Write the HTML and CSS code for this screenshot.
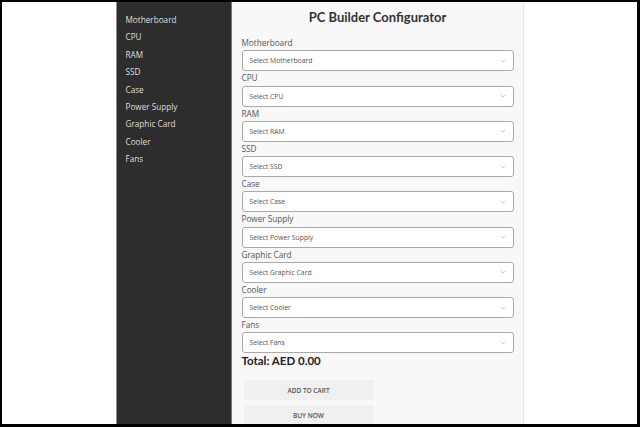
FILE: index.html
```html
<!DOCTYPE html>
<html lang="en">
<head>
<meta charset="utf-8">
<title>PC Builder Configurator</title>
<link rel="stylesheet" href="styles.css">
</head>
<body>
<div class="frame">
  <div class="layout">
    <nav class="sidebar">
      <a class="nav-item">Motherboard</a>
      <a class="nav-item">CPU</a>
      <a class="nav-item">RAM</a>
      <a class="nav-item">SSD</a>
      <a class="nav-item">Case</a>
      <a class="nav-item">Power Supply</a>
      <a class="nav-item">Graphic Card</a>
      <a class="nav-item">Cooler</a>
      <a class="nav-item">Fans</a>
    </nav>
    <main class="main">
      <h1 class="title">PC Builder Configurator</h1>
      <div class="field"><label class="label">Motherboard</label><div class="select"><span>Select Motherboard</span><svg class="chev" viewBox="0 0 8 5"><path d="M1 1l3 3 3-3"/></svg></div></div>
      <div class="field"><label class="label">CPU</label><div class="select"><span>Select CPU</span><svg class="chev" viewBox="0 0 8 5"><path d="M1 1l3 3 3-3"/></svg></div></div>
      <div class="field"><label class="label">RAM</label><div class="select"><span>Select RAM</span><svg class="chev" viewBox="0 0 8 5"><path d="M1 1l3 3 3-3"/></svg></div></div>
      <div class="field"><label class="label">SSD</label><div class="select"><span>Select SSD</span><svg class="chev" viewBox="0 0 8 5"><path d="M1 1l3 3 3-3"/></svg></div></div>
      <div class="field"><label class="label">Case</label><div class="select"><span>Select Case</span><svg class="chev" viewBox="0 0 8 5"><path d="M1 1l3 3 3-3"/></svg></div></div>
      <div class="field"><label class="label">Power Supply</label><div class="select"><span>Select Power Supply</span><svg class="chev" viewBox="0 0 8 5"><path d="M1 1l3 3 3-3"/></svg></div></div>
      <div class="field"><label class="label">Graphic Card</label><div class="select"><span>Select Graphic Card</span><svg class="chev" viewBox="0 0 8 5"><path d="M1 1l3 3 3-3"/></svg></div></div>
      <div class="field"><label class="label">Cooler</label><div class="select"><span>Select Cooler</span><svg class="chev" viewBox="0 0 8 5"><path d="M1 1l3 3 3-3"/></svg></div></div>
      <div class="field"><label class="label">Fans</label><div class="select"><span>Select Fans</span><svg class="chev" viewBox="0 0 8 5"><path d="M1 1l3 3 3-3"/></svg></div></div>
      <div class="total">Total: AED 0.00</div>
      <div class="actions">
        <button class="btn">ADD TO CART</button>
        <button class="btn">BUY NOW</button>
      </div>
    </main>
  </div>
</div>
</body>
</html>
```

FILE: styles.css
```css
* { box-sizing: border-box; }
html, body { margin: 0; padding: 0; background: #fff; }
body { width: 640px; height: 427px; overflow: hidden; }

.frame {
  width: 640px;
  height: 427px;
  border-style: solid;
  border-color: #000;
  border-width: 2px 3px 3px 2px;
  background: #fff;
  overflow: hidden;
}

.layout {
  display: flex;
  justify-content: center;
  height: 100%;
}

.sidebar {
  width: 116px;
  flex: none;
  background: #2d2d2d;
  border-left: 1px solid #8a8a8a;
  border-right: 1px solid #7a7a7a;
  padding: 9px 0 0 9px;
  display: flex;
  flex-direction: column;
  font-family: "Open Sans", sans-serif;
}

.nav-item {
  display: block;
  color: #dedede;
  font-size: 8.2px;
  line-height: 17.375px;
  text-decoration: none;
}

.main {
  width: 292px;
  flex: none;
  background: #f8f8f8;
  border-right: 1px solid #e6e6e6;
  padding: 0 9px 0 10px;
  display: flex;
  flex-direction: column;
  font-family: "Open Sans", sans-serif;
}

.title {
  margin: 6px 0 10px;
  text-align: center;
  font-family: Lato, sans-serif;
  font-weight: 700;
  font-size: 13px;
  line-height: 18px;
  color: #333;
}

.field {
  display: flex;
  flex-direction: column;
}

.label {
  font-size: 8.2px;
  line-height: 14.25px;
  color: #555;
}

.select {
  height: 21px;
  background: #fff;
  border: 1px solid #a9a9a9;
  border-radius: 3px;
  display: flex;
  align-items: center;
  justify-content: space-between;
  padding: 0 7px 0 7px;
  font-size: 6.8px;
  color: #555;
}

.chev {
  width: 6px;
  height: 4px;
  fill: none;
  stroke: #b0b0b0;
  stroke-width: 1;
}

.total {
  margin-top: 0;
  font-family: Lato, sans-serif;
  font-weight: 700;
  font-size: 11.5px;
  line-height: 16px;
  color: #222;
}

.actions {
  margin-top: 11px;
  padding-left: 2px;
  display: flex;
  flex-direction: column;
  gap: 5px;
}

.btn {
  width: 130px;
  height: 20px;
  border: none;
  background: #f0f0f0;
  font-family: "Open Sans", sans-serif;
  font-size: 6.5px;
  font-weight: 600;
  color: #555;
  padding: 0;
}
```
